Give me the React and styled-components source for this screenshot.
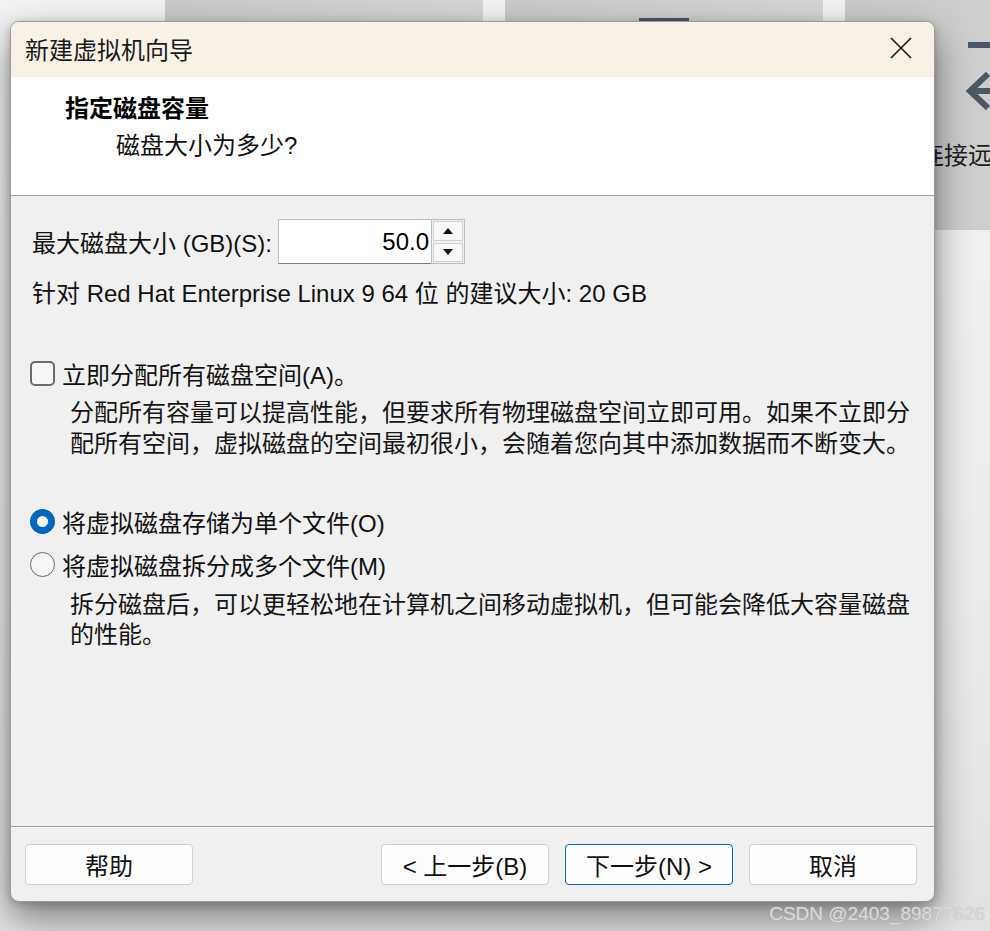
import styled, { createGlobalStyle } from "styled-components"

const GlobalStyle = createGlobalStyle`
    html, body {
        margin: 0;
        padding: 0;
        background: #ececec;
    }
    body {
        font-family: "Liberation Sans", "Noto Sans CJK SC", sans-serif;
        color: #111;
    }
`

const Desk = styled.div`
    position: relative;
    width: 990px;
    height: 931px;
    overflow: hidden;
    background: linear-gradient(180deg, #f2f2f2 0%, #ececec 60%, #e2e2e2 100%);
`

const CardRow = styled.div`
    display: flex;
    gap: 22px;
    padding-left: 165px;
    margin-top: -30px;
`

const Card = styled.div`
    flex: 0 0 318px;
    height: 260px;
    background: linear-gradient(90deg, #c9c9c9, #d4d4d4);
    display: flex;
    flex-direction: column;
    align-items: center;
    padding-top: ${(p) => p.$top}px;
    box-sizing: border-box;
    gap: 24px;
    .label {
        font-size: 24px;
        color: #1c1c1c;
    }
`

const Dialog = styled.div`
    position: absolute;
    left: 10px;
    top: 21px;
    width: 925px;
    height: 881px;
    box-sizing: border-box;
    border: 1px solid #9c9c9c;
    border-radius: 9px;
    overflow: hidden;
    background: #f0f0f0;
    display: flex;
    flex-direction: column;
    box-shadow: 0 16px 36px rgba(0, 0, 0, 0.45), 0 2px 8px rgba(0, 0, 0, 0.2);
`

const TitleBar = styled.div`
    height: 55px;
    flex: 0 0 55px;
    box-sizing: border-box;
    background: #f7f2e5;
    display: flex;
    align-items: center;
    justify-content: space-between;
    padding: 0 20px 3px 14px;
    font-size: 24px;
    color: #1a1a1a;
`

const CloseButton = styled.div`
    width: 26px;
    height: 26px;
    display: flex;
    align-items: center;
    justify-content: center;
`

const Header = styled.div`
    height: 119px;
    flex: 0 0 119px;
    box-sizing: border-box;
    background: #fff;
    border-bottom: 1px solid #a0a0a0;
    padding: 17px 0 0 54px;
    .title {
        font-size: 24px;
        font-weight: 700;
        line-height: 30px;
        color: #000;
    }
    .sub {
        font-size: 24px;
        line-height: 30px;
        margin-top: 7px;
        padding-left: 51px;
        color: #111;
    }
`

const Body = styled.div`
    flex: 1;
    padding: 23px 0 0 21px;
    font-size: 24px;
    color: #111;
`

const SizeRow = styled.div`
    display: flex;
    align-items: center;
    height: 45px;
    gap: 6px;
`

const Spin = styled.div`
    display: flex;
    height: 45px;
    .field {
        width: 153px;
        height: 45px;
        box-sizing: border-box;
        background: #fff;
        border: 1px solid #bdbdbd;
        border-bottom-color: #7a7a7a;
        border-right: none;
        display: flex;
        align-items: center;
        justify-content: flex-end;
        padding-right: 2px;
        font-size: 24px;
        color: #000;
    }
    .arrows {
        width: 34px;
        display: flex;
        flex-direction: column;
        box-sizing: border-box;
        border: 1px solid #bdbdbd;
        background: #f0f0f0;
    }
`

const SpinButton = styled.div`
    flex: 1;
    margin: 1px;
    border: 1px solid #cfcfcf;
    background: #f7f7f7;
    display: flex;
    align-items: center;
    justify-content: center;
`

const Line = styled.div`
    line-height: 30px;
    margin-top: ${(p) => p.$gap || 0}px;
`

const Option = styled.div`
    display: flex;
    align-items: center;
    height: 30px;
    gap: 7px;
    margin-top: ${(p) => p.$gap || 0}px;
    margin-left: -2px;
`

const CheckBox = styled.div`
    width: 25px;
    height: 25px;
    box-sizing: border-box;
    border: 2px solid #6b6b6b;
    border-radius: 5px;
    background: #f6f6f6;
`

const Radio = styled.div`
    width: 25px;
    height: 25px;
    box-sizing: border-box;
    border-radius: 50%;
    border: ${(p) => (p.$on ? "7.5px solid #0067c0" : "1.5px solid #6b6b6b")};
    background: ${(p) => (p.$on ? "#fff" : "#f6f6f6")};
`

const Note = styled.div`
    padding-left: 38px;
    padding-right: 20px;
    line-height: ${(p) => p.$lh}px;
    margin-top: ${(p) => p.$gap}px;
    color: #151515;
`

const Footer = styled.div`
    flex: 0 0 75px;
    box-sizing: border-box;
    border-top: 1px solid #a0a0a0;
    box-shadow: inset 0 1px 0 #fafafa;
    display: flex;
    align-items: flex-start;
    padding: 17px 17px 0 14px;
    gap: 16px;
    .spacer {
        flex: 1;
    }
`

const Button = styled.div`
    width: 168px;
    height: 41px;
    box-sizing: border-box;
    background: #fdfdfd;
    border: 1px solid ${(p) => (p.$primary ? "#0067c0" : "#d0d0d0")};
    border-radius: 4px;
    display: flex;
    align-items: center;
    justify-content: center;
    font-size: 24px;
    color: #111;
`

const Watermark = styled.div`
    position: absolute;
    right: 5px;
    bottom: 6px;
    font-family: "Liberation Sans Narrow", "Liberation Sans", sans-serif;
    font-size: 19px;
    color: #dadada;
    text-shadow: 0 0 1px #b0b0b0;
`

function Triangle({ up }) {
    return (
        <svg width="12" height="8" viewBox="0 0 12 8">
            <path d={up ? "M1 7 L6 1 L11 7 Z" : "M1 1 L6 7 L11 1 Z"} fill="#111" />
        </svg>
    )
}

function App() {
    return (
        <Desk>
            <GlobalStyle />
            <CardRow>
                <Card $top={200} />
                <Card $top={48}>
                    <svg width="50" height="60" viewBox="0 0 50 60">
                        <rect x="0" y="0" width="50" height="5" fill="#4b5966" />
                    </svg>
                </Card>
                <Card $top={72}>
                    <svg width="80" height="70" viewBox="0 0 80 70">
                        <rect x="4" y="0" width="72" height="6" fill="#4b5966" />
                        <path d="M24 32 L6 49 L24 66 M6 49 L60 49" stroke="#4b5966" strokeWidth="6" fill="none" />
                    </svg>
                    <span className="label">连接远程服务器</span>
                </Card>
            </CardRow>

            <Dialog>
                <TitleBar>
                    <span>新建虚拟机向导</span>
                    <CloseButton>
                        <svg width="22" height="22" viewBox="0 0 22 22">
                            <path d="M1 1 L21 21 M21 1 L1 21" stroke="#1a1a1a" strokeWidth="1.6" />
                        </svg>
                    </CloseButton>
                </TitleBar>
                <Header>
                    <div className="title">指定磁盘容量</div>
                    <div className="sub">磁盘大小为多少?</div>
                </Header>
                <Body>
                    <SizeRow>
                        <span>最大磁盘大小 (GB)(S):</span>
                        <Spin>
                            <div className="field">50.0</div>
                            <div className="arrows">
                                <SpinButton><Triangle up /></SpinButton>
                                <SpinButton><Triangle /></SpinButton>
                            </div>
                        </Spin>
                    </SizeRow>
                    <Line $gap={15}>针对 Red Hat Enterprise Linux 9 64 位 的建议大小: 20 GB</Line>

                    <Option $gap={49}>
                        <CheckBox />
                        <span>立即分配所有磁盘空间(A)。</span>
                    </Option>
                    <Note $lh={31} $gap={9}>
                        分配所有容量可以提高性能，但要求所有物理磁盘空间立即可用。如果不立即分配所有空间，虚拟磁盘的空间最初很小，会随着您向其中添加数据而不断变大。
                    </Note>

                    <Option $gap={47}>
                        <Radio $on />
                        <span>将虚拟磁盘存储为单个文件(O)</span>
                    </Option>
                    <Option $gap={13}>
                        <Radio />
                        <span>将虚拟磁盘拆分成多个文件(M)</span>
                    </Option>
                    <Note $lh={30} $gap={11}>
                        拆分磁盘后，可以更轻松地在计算机之间移动虚拟机，但可能会降低大容量磁盘的性能。
                    </Note>
                </Body>
                <Footer>
                    <Button>帮助</Button>
                    <div className="spacer" />
                    <Button>&lt; 上一步(B)</Button>
                    <Button $primary>下一步(N) &gt;</Button>
                    <Button>取消</Button>
                </Footer>
            </Dialog>

            <Watermark>CSDN @2403_89877626</Watermark>
        </Desk>
    )
}

export default App
